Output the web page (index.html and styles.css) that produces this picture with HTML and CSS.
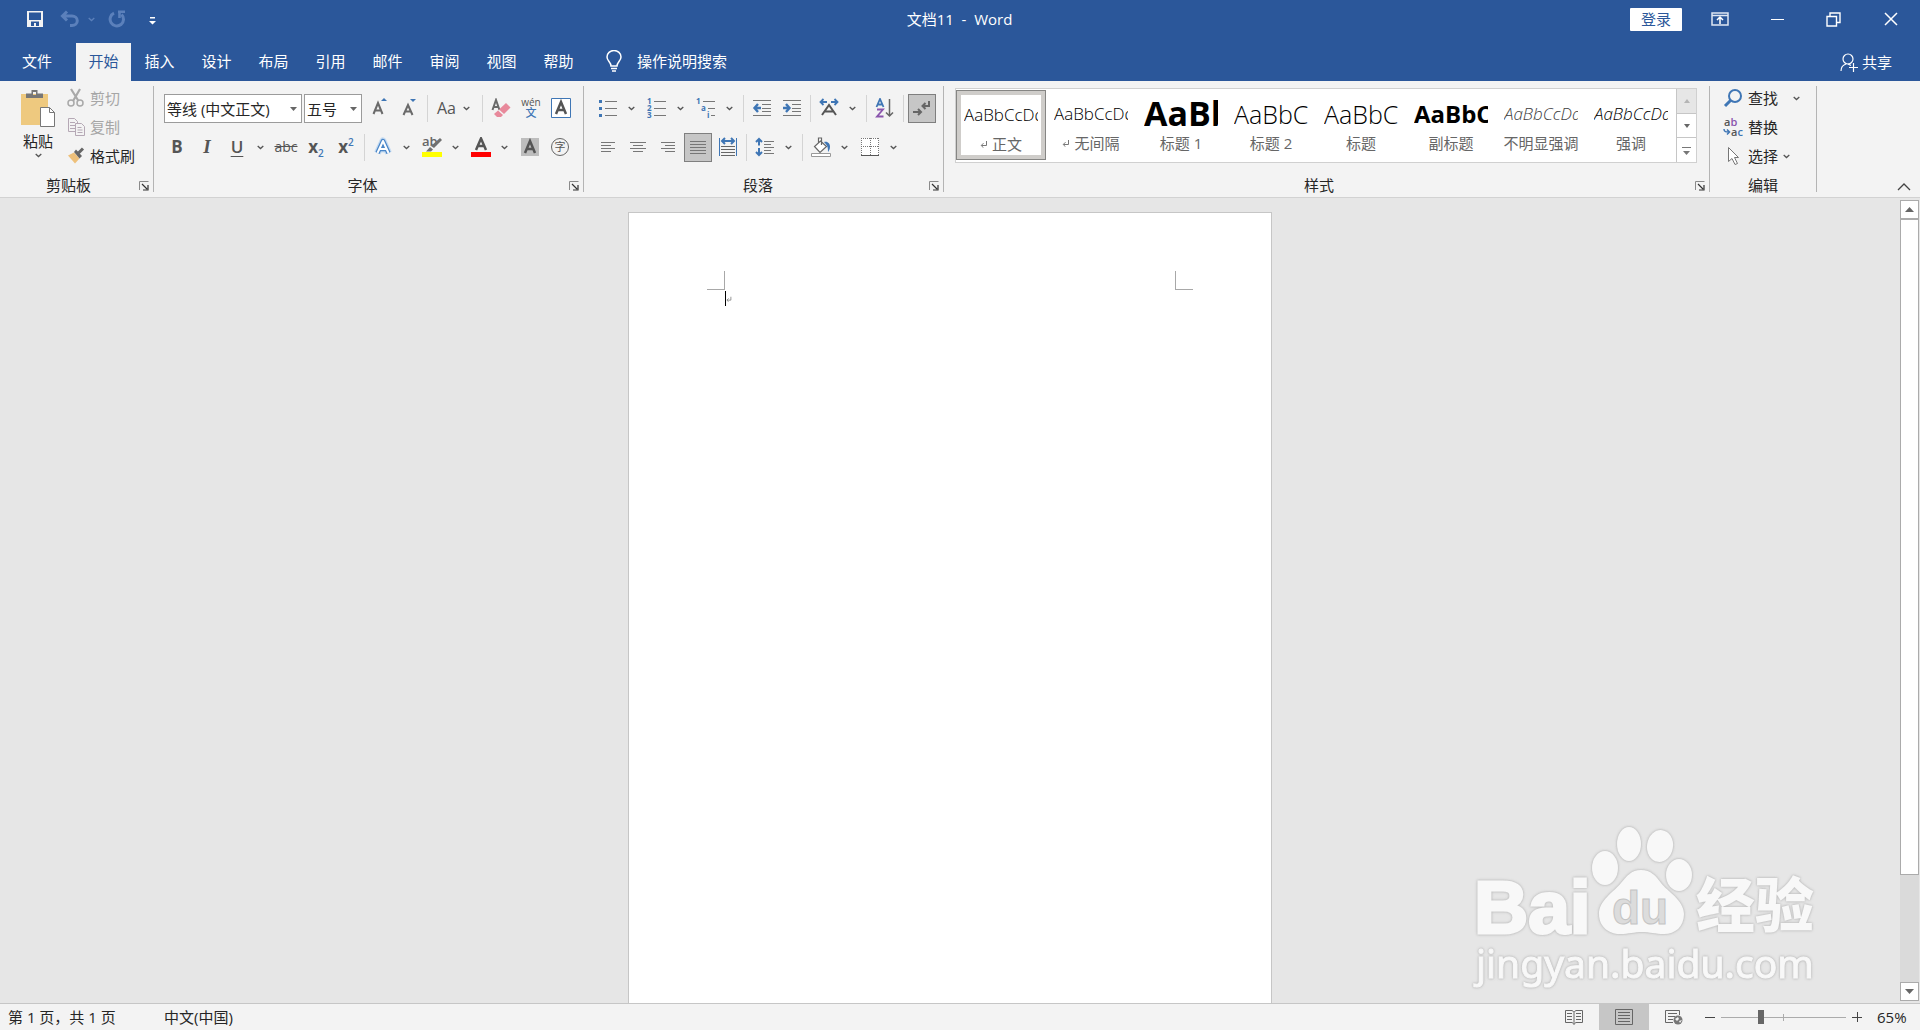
FILE: index.html
```html
<!DOCTYPE html>
<html lang="zh-CN">
<head>
<meta charset="utf-8">
<title>文档11 - Word</title>
<link rel="stylesheet" href="styles.css">
</head>
<body>
<svg class="defs" aria-hidden="true">
  <symbol id="chev" viewBox="0 0 7 5"><path d="M.7 .9 3.5 3.5 6.3 .9" fill="none" stroke="currentColor" stroke-width="1.3"/></symbol>
  <symbol id="launch" viewBox="0 0 10 10"><path d="M.5 9V.5H9.500" fill="none" stroke="#8a8a8a"/><path d="M3 3l5 5M9 4v5H4" fill="none" stroke="#333" stroke-width="1.2"/></symbol>
  <symbol id="enter" viewBox="0 0 8 8"><path d="M6.500 1v4.500H1.500M3.500 3.200 1.200 5.500l2.300 2.300" fill="none" stroke="#777"/></symbol>
</svg>

<header class="titlebar">
  <div class="quick">
    <button class="qbtn save" aria-label="保存"><svg width="18" height="18" viewBox="0 0 18 18"><path fill="#f3f3f3" fill-rule="evenodd" d="M1 1h16v16H1zM3 2.500v7.500h12V2.500zM5 11.500V16h3v-3h2v3h3v-4.500z"/></svg></button>
    <button class="qbtn undo" aria-label="撤消"><svg width="20" height="18" viewBox="0 0 20 18"><path d="M7 1.500 2.500 6 7 10.500M3 6h9a5 4.500 0 0 1 0 9.500h-2" fill="none" stroke="#5b80bb" stroke-width="3"/></svg></button>
    <button class="qbtn mini" aria-label="撤消列表"><svg width="7" height="5"><use href="#chev"/></svg></button>
    <button class="qbtn redo" aria-label="重复"><svg width="18" height="18" viewBox="0 0 18 18"><path d="M6 3.200A6.700 6.700 0 1 0 13.500 4.500" fill="none" stroke="#5b80bb" stroke-width="3"/><path d="M10 1.800h7M11.500 1.500v6.500" fill="none" stroke="#5b80bb" stroke-width="2.600"/></svg></button>
    <button class="qbtn more" aria-label="自定义"><svg width="7" height="8" viewBox="0 0 7 8"><path fill="#fff" d="M1 0h5v1.500H1zM0 4h7L3.500 7.500z"/></svg></button>
  </div>
  <h1 class="title">文档11&nbsp; -&nbsp; Word</h1>
  <div class="window">
    <button class="login">登录</button>
    <button class="wbtn" aria-label="功能区显示选项"><svg width="18" height="14" viewBox="0 0 18 14"><path fill="none" stroke="#dfe7f3" stroke-width="1.500" d="M1 1h16v12H1zM1 3.500h16"/><path fill="none" stroke="#fff" stroke-width="1.500" d="M9 12V5.500M6 8l3-3 3 3"/></svg></button>
    <button class="wbtn" aria-label="最小化"><svg width="14" height="3"><path fill="#fff" d="M1 1h13v1H1z"/></svg></button>
    <button class="wbtn" aria-label="还原"><svg width="15" height="15" viewBox="0 0 15 15"><path fill="none" stroke="#fff" stroke-width="1.400" d="M1 4.500h9.500V14H1zM4 4V1h10v9.500h-3.500"/></svg></button>
    <button class="wbtn" aria-label="关闭"><svg width="14" height="14" viewBox="0 0 14 14"><path stroke="#fff" stroke-width="1.500" d="m1 1 12 12M13 1 1 13"/></svg></button>
  </div>
</header>

<nav class="tabs">
  <button class="tab file">文件</button>
  <button class="tab active">开始</button>
  <button class="tab">插入</button>
  <button class="tab">设计</button>
  <button class="tab">布局</button>
  <button class="tab">引用</button>
  <button class="tab">邮件</button>
  <button class="tab">审阅</button>
  <button class="tab">视图</button>
  <button class="tab">帮助</button>
  <button class="tell"><svg width="16" height="22" viewBox="0 0 16 22"><path fill="none" stroke="#fff" stroke-width="1.500" d="M5 16c0-4-4-5-4-9a7 6.500 0 0 1 14 0c0 4-4 5-4 9zM5 18.500h6M6 21h4"/></svg>操作说明搜索</button>
  <button class="share"><svg width="18" height="19" viewBox="0 0 18 19"><circle cx="8" cy="6" r="5" fill="none" stroke="#fff" stroke-width="1.200"/><path fill="none" stroke="#fff" stroke-width="1.200" d="M1 18c0-4 2-6 5-7M8 11l3 1.500M13.500 10v9M9 14.500h9"/></svg>共享</button>
</nav>

<div class="ribbon">
  <section class="group clipboard">
    <div class="clip">
      <button class="paste">
        <svg width="36" height="40" viewBox="0 0 36 40"><path fill="#eec97f" d="M1 5h27v31H1z"/><path fill="#777" fill-rule="evenodd" d="M6 9V4.500h5.500V1h6v3.500H23V9zM13 3h3v3h-3z"/><path fill="#fff" stroke="#777" d="M20.500 18.500h9l5 5v14h-14z"/><path fill="none" stroke="#777" d="M29.500 18.500v5h5"/></svg>
        <span>粘贴</span>
        <svg width="7" height="5"><use href="#chev"/></svg>
      </button>
      <div class="stack">
        <button class="item off"><svg width="18" height="20" viewBox="0 0 18 20"><g fill="none" stroke="#a9a9a9"><path stroke-width="2.200" d="M4 1l7.500 12M13 1 6 13"/><circle cx="4" cy="15" r="3" stroke-width="1.500"/><circle cx="13" cy="15" r="3" stroke-width="1.500"/></g></svg>剪切</button>
        <button class="item off"><svg width="18" height="20" viewBox="0 0 18 20"><g fill="#f3f3f3" stroke="#b5a8b5"><path d="M1.500 1.500h6l3 3v10h-9z"/><path d="M3 5.500h5M3 8.500h5M3 11.500h5"/><path d="M8.500 6.500h6l3 3v9h-9z"/><path d="M10.500 10.500h4M10.500 13h5M10.500 15.500h5"/></g></svg>复制</button>
        <button class="item"><svg width="18" height="20" viewBox="0 0 18 20"><path fill="#eec07a" d="M1 9.500 7 6.500l5.500 6L8 17.500z"/><path fill="#666" d="m7 6 2-2.500 6 6.500-2.500 2.500z"/><path stroke="#666" stroke-width="3" d="m11.500 7 4.500-4.500"/></svg>格式刷</button>
      </div>
    </div>
    <footer><span>剪贴板</span><button class="launcher" aria-label="剪贴板选项"><svg width="10" height="10"><use href="#launch"/></svg></button></footer>
  </section>
  <div class="divider"></div>

  <section class="group font">
    <div class="row">
      <label class="combo name"><select aria-label="字体"><option>等线 (中文正文)</option></select><svg width="7" height="4"><path fill="#666" d="M0 0h7L3.500 4z"/></svg></label>
      <label class="combo size"><select aria-label="字号"><option>五号</option></select><svg width="7" height="4"><path fill="#666" d="M0 0h7L3.500 4z"/></svg></label>
      <button class="tool" aria-label="增大字号"><svg width="20" height="20" viewBox="0 0 20 20"><path fill="none" stroke="#6a6a6a" stroke-width="2" d="M4.500 16 9 5l4.500 11M6 12.500h6"/><path fill="#3f76b5" d="m12 3 3-3 3 3z"/></svg></button>
      <button class="tool" aria-label="减小字号"><svg width="20" height="20" viewBox="0 0 20 20"><path fill="none" stroke="#6a6a6a" stroke-width="2" d="M4.500 17 9 7l4.500 10M6 13.500h6"/><path fill="#3f76b5" d="m11 1 3 3 3-3z"/></svg></button>
      <i class="sep"></i>
      <button class="tool case">Aa<svg width="7" height="5"><use href="#chev"/></svg></button>
      <i class="sep"></i>
      <button class="tool" aria-label="清除格式"><svg width="20" height="20" viewBox="0 0 20 20"><path fill="none" stroke="#6a6a6a" stroke-width="2" d="M1.500 12 5 2l3.500 10M3 9h4"/><path fill="#e8899b" d="m15 5 4.500 4.500L13 16l-5-4.500z"/><path fill="#e8899b" d="m7 12.500 5 4.500-2 2H6l-3-3z"/></svg></button>
      <button class="tool pinyin" aria-label="拼音指南"><small>wén</small><b>文</b></button>
      <button class="tool" aria-label="字符边框"><svg width="20" height="20" viewBox="0 0 20 20"><path fill="#fff" stroke="#3f76b5" d="M.5 .5h19v19H.5z"/><path fill="none" stroke="#555" stroke-width="2.500" d="M5 16 10 4l5 12M7 12h6"/></svg></button>
    </div>
    <div class="row">
      <button class="tool bold">B</button>
      <button class="tool italic">I</button>
      <button class="tool under">U</button><button class="drop" aria-label="下划线样式"><svg width="7" height="5"><use href="#chev"/></svg></button>
      <button class="tool strike">abc</button>
      <button class="tool script"><span>x<sub>2</sub></span></button>
      <button class="tool script"><span>x<sup>2</sup></span></button>
      <i class="sep"></i>
      <button class="tool" aria-label="文本效果"><svg width="20" height="20" viewBox="0 0 20 20"><g fill="none" stroke-linejoin="round"><path stroke="#c5dbf1" stroke-width="7" d="M4.500 16 10 4l5.500 12M7 12h6"/><path stroke="#4a86c8" stroke-width="4.500" d="M4.500 16 10 4l5.500 12M7 12h6"/><path stroke="#fff" stroke-width="2" d="M4.500 16 10 4l5.500 12M7 12h6"/></g></svg></button><button class="drop" aria-label="文本效果列表"><svg width="7" height="5"><use href="#chev"/></svg></button>
      <button class="tool mark" aria-label="突出显示"><svg width="20" height="20" viewBox="0 0 20 20"><path fill="#ff0" d="M0 15h20v5H0z"/><text x="0" y="9" class="abtext">ab</text><path fill="#707070" d="m18 1 2 2-8 8-3-2zM8 10l3 2.500-2 2H4z"/></svg></button><button class="drop" aria-label="突出显示颜色"><svg width="7" height="5"><use href="#chev"/></svg></button>
      <button class="tool" aria-label="字体颜色"><svg width="20" height="20" viewBox="0 0 20 20"><path fill="red" d="M0 15h20v5H0z"/><path fill="none" stroke="#555" stroke-width="2.500" d="M5 13 10 1.500 15 13M7 9h6"/></svg></button><button class="drop" aria-label="字体颜色列表"><svg width="7" height="5"><use href="#chev"/></svg></button>
      <button class="tool" aria-label="字符底纹"><svg width="18" height="18" viewBox="0 0 18 18"><path fill="#bdbdbd" d="M0 0h18v18H0z"/><path fill="none" stroke="#555" stroke-width="2.500" d="M4 15 9 3l5 12M6 11h6"/></svg></button>
      <button class="tool"><span class="ring">字</span></button>
    </div>
    <footer><span>字体</span><button class="launcher" aria-label="字体选项"><svg width="10" height="10"><use href="#launch"/></svg></button></footer>
  </section>
  <div class="divider"></div>

  <section class="group para">
    <div class="row">
      <button class="tool" aria-label="项目符号"><svg width="20" height="20" viewBox="0 0 20 20"><path stroke="#777" d="M7 3.500h12M7 10.500h12M7 17.500h12"/><path fill="#3f76b5" d="M1 2h3v3H1zM1 9h3v3H1zM1 16h3v3H1z"/></svg></button><button class="drop" aria-label="项目符号库"><svg width="7" height="5"><use href="#chev"/></svg></button>
      <button class="tool" aria-label="编号"><svg width="20" height="20" viewBox="0 0 20 20"><path stroke="#777" d="M7 3.500h12M7 10.500h12M7 17.500h12"/><g class="nums"><text x="0" y="6">1</text><text x="0" y="13">2</text><text x="0" y="20">3</text></g></svg></button><button class="drop" aria-label="编号库"><svg width="7" height="5"><use href="#chev"/></svg></button>
      <button class="tool" aria-label="多级列表"><svg width="20" height="20" viewBox="0 0 20 20"><path stroke="#777" d="M7 3.500h12M12 10.500h7M15 17.500h4"/><g class="nums"><text x="0" y="6">1</text><text x="5" y="13">a</text><text x="11" y="20">i</text></g></svg></button><button class="drop" aria-label="多级列表库"><svg width="7" height="5"><use href="#chev"/></svg></button>
      <i class="sep"></i>
      <button class="tool" aria-label="减少缩进量"><svg width="20" height="20" viewBox="0 0 20 20"><path stroke="#777" d="M1 2.500h18M10 6.500h9M10 10.500h9M10 13.500h9M1 17.500h18"/><path fill="none" stroke="#3f76b5" stroke-width="2.400" d="M9 10H2.500M6 6 2.500 10 6 14"/></svg></button>
      <button class="tool" aria-label="增加缩进量"><svg width="20" height="20" viewBox="0 0 20 20"><path stroke="#777" d="M1 2.500h18M10 6.500h9M10 10.500h9M10 13.500h9M1 17.500h18"/><path fill="none" stroke="#3f76b5" stroke-width="2.400" d="M1 10h6.500M4 6 7.500 10 4 14"/></svg></button>
      <i class="sep"></i>
      <button class="tool" aria-label="中文版式"><svg width="20" height="20" viewBox="0 0 20 20"><path fill="none" stroke="#555" stroke-width="2" d="m3 17 7-10 7 10M6 13.500h8"/><path fill="none" stroke="#3f76b5" stroke-width="1.800" d="M8 4H1.500M4.500 1 1.500 4l3 3M12 4h6.500M15.500 1l3 3-3 3"/></svg></button><button class="drop" aria-label="中文版式列表"><svg width="7" height="5"><use href="#chev"/></svg></button>
      <i class="sep"></i>
      <button class="tool" aria-label="排序"><svg width="20" height="20" viewBox="0 0 20 20"><path fill="none" stroke="#3f76b5" stroke-width="1.800" d="M1.500 9 5 1l3.500 8M3 6.500h4"/><path fill="none" stroke="#8a55ad" stroke-width="1.800" d="M2 11.500h6L2 18.500h6.500"/><path fill="none" stroke="#666" stroke-width="1.500" d="M14.500 1v17M11 14.500l3.500 3.500 3.500-3.500"/></svg></button>
      <i class="sep"></i>
      <button class="tool on" aria-label="显示编辑标记"><svg width="20" height="20" viewBox="0 0 20 20"><path fill="none" stroke="#666" stroke-width="2" d="M17 2v5h-6M13.500 4 10.500 7l3 3M1 13h7M6 10l3 3-3 3"/></svg></button>
    </div>
    <div class="row">
      <button class="tool" aria-label="左对齐"><svg width="20" height="20" viewBox="0 0 20 20"><path stroke="#777" d="M3 5.500h14M3 8.500h10M3 11.500h14M3 14.500h10"/></svg></button>
      <button class="tool" aria-label="居中"><svg width="20" height="20" viewBox="0 0 20 20"><path stroke="#777" d="M2 5.500h16M5 8.500h10M2 11.500h16M5 14.500h10"/></svg></button>
      <button class="tool" aria-label="右对齐"><svg width="20" height="20" viewBox="0 0 20 20"><path stroke="#777" d="M3 5.500h14M7 8.500h10M3 11.500h14M7 14.500h10"/></svg></button>
      <button class="tool on" aria-label="两端对齐"><svg width="20" height="20" viewBox="0 0 20 20"><path stroke="#777" d="M2 3.500h16M2 6.500h16M2 9.500h16M2 12.500h16M2 15.500h16"/></svg></button>
      <button class="tool" aria-label="分散对齐"><svg width="20" height="20" viewBox="0 0 20 20"><path stroke="#3f76b5" d="M1.500 1v18M18.500 1v18"/><path stroke="#666" d="M3 9.500h14M3 12.500h14M3 15.500h14M3 18.500h14"/><path fill="none" stroke="#3f76b5" stroke-width="2" d="M4 4h12M7 1 4 4l3 3M13 1l3 3-3 3"/></svg></button>
      <i class="sep"></i>
      <button class="tool" aria-label="行距"><svg width="20" height="20" viewBox="0 0 20 20"><path stroke="#777" d="M9 4.500h10M9 7.500h7M9 10.500h10M9 13.500h7M9 16.500h10"/><path fill="none" stroke="#3f76b5" stroke-width="2" d="M4 2v6.500M1 5l3-3 3 3M4 11v7M1 15l3 3 3-3"/></svg></button><button class="drop" aria-label="行距列表"><svg width="7" height="5"><use href="#chev"/></svg></button>
      <i class="sep"></i>
      <button class="tool" aria-label="底纹"><svg width="20" height="20" viewBox="0 0 20 20"><path fill="#fff" stroke="#999" d="M.5 16.500h19v3H.5z"/><path fill="#fff" stroke="#666" stroke-width="1.200" d="m9.500 4 6 5.500-6.500 6-5.500-6zM7.500 6V1h3v7"/><path fill="#3f76b5" d="M13 5c4-1 6 2 6 4.500 0 3-1 4-2 5.500 0-4 0-6-4-10z"/></svg></button><button class="drop" aria-label="底纹颜色"><svg width="7" height="5"><use href="#chev"/></svg></button>
      <button class="tool" aria-label="边框"><svg width="18" height="18" viewBox="0 0 18 18"><path fill="#fff" d="M0 0h18v18H0z"/><path fill="none" stroke="#777" stroke-dasharray="1 1" d="M0 .5h18M.5 0v17M17.500 0v17M9.500 0v17M0 8.500h18"/><path stroke="#555" d="M0 17.500h18"/></svg></button><button class="drop" aria-label="边框列表"><svg width="7" height="5"><use href="#chev"/></svg></button>
    </div>
    <footer><span>段落</span><button class="launcher" aria-label="段落选项"><svg width="10" height="10"><use href="#launch"/></svg></button></footer>
  </section>
  <div class="divider"></div>

  <section class="group styles">
    <div class="gallery">
      <button class="style chosen"><span class="sample">AaBbCcDd</span><span class="label"><svg width="8" height="8"><use href="#enter"/></svg>正文</span></button>
      <button class="style"><span class="sample">AaBbCcDd</span><span class="label"><svg width="8" height="8"><use href="#enter"/></svg>无间隔</span></button>
      <button class="style"><span class="sample h1">AaBb</span><span class="label">标题 1</span></button>
      <button class="style"><span class="sample h2">AaBbC</span><span class="label">标题 2</span></button>
      <button class="style"><span class="sample h2">AaBbC</span><span class="label">标题</span></button>
      <button class="style"><span class="sample h2 heavy">AaBbC</span><span class="label">副标题</span></button>
      <button class="style"><span class="sample slant faint">AaBbCcDd</span><span class="label">不明显强调</span></button>
      <button class="style"><span class="sample slant">AaBbCcDd</span><span class="label">强调</span></button>
      <div class="nudge">
        <button disabled aria-label="上一行"><svg width="6" height="4"><path fill="#b5b5b5" d="M0 4h6L3 0z"/></svg></button>
        <button aria-label="下一行"><svg width="6" height="4"><path fill="#666" d="M0 0h6L3 4z"/></svg></button>
        <button aria-label="其他样式"><svg width="9" height="9"><path fill="#777" d="M0 1h9v1H0zM1 5h7L4.500 9z"/></svg></button>
      </div>
    </div>
    <footer><span>样式</span><button class="launcher" aria-label="样式选项"><svg width="10" height="10"><use href="#launch"/></svg></button></footer>
  </section>
  <div class="divider"></div>

  <section class="group edit">
    <div class="stack">
      <button class="item"><svg width="20" height="20" viewBox="0 0 20 20"><circle cx="12" cy="8" r="6" fill="none" stroke="#3f76b5" stroke-width="2"/><path stroke="#3f76b5" stroke-width="3" d="m8 12-6 6"/></svg>查找<svg class="far" width="7" height="5"><use href="#chev"/></svg></button>
      <button class="item"><svg width="20" height="20" viewBox="0 0 20 20"><text x="1" y="9" class="rep">a<tspan fill="#8a55ad">b</tspan></text><text x="8" y="19" class="rep">a<tspan fill="#3f76b5">c</tspan></text><path fill="none" stroke="#3f76b5" stroke-width="1.500" d="M1 12c0 3 2 3 5 3M4 12.500 6.500 15 4 17.500"/></svg>替换</button>
      <button class="item"><svg width="20" height="20" viewBox="0 0 20 20"><path fill="#fff" stroke="#777" d="M5.500 1.500v14l3.500-3 3 6 2.500-1-3-6h4z"/></svg>选择<svg width="7" height="5"><use href="#chev"/></svg></button>
    </div>
    <footer><span>编辑</span></footer>
  </section>
  <div class="divider"></div>
  <button class="collapse" aria-label="折叠功能区"><svg width="14" height="8" viewBox="0 0 14 8"><path fill="none" stroke="#444" stroke-width="1.300" d="m1 7 6-6 6 6"/></svg></button>
</div>

<main class="workspace">
  <div class="canvas">
    <article class="page">
      <div class="marks"><i class="corner left"></i><i class="corner right"></i></div>
      <p class="line"><i class="caret"></i><svg width="6" height="6" viewBox="0 0 8 8"><use href="#enter"/></svg></p>
    </article>
  </div>
  <div class="scroll">
    <button aria-label="向上滚动"><svg width="9" height="5"><path fill="#666" d="M0 5h9L4.500 0z"/></svg></button>
    <div class="track"><div class="thumb"></div></div>
    <button aria-label="向下滚动"><svg width="9" height="5"><path fill="#666" d="M0 0h9L4.500 5z"/></svg></button>
  </div>
  <svg class="watermark" width="360" height="180" viewBox="0 0 360 180">
    <g class="halo">
      <text x="5" y="113" class="bai">Bai</text>
      <ellipse cx="136" cy="48" rx="13" ry="17"/>
      <ellipse cx="160" cy="24" rx="12" ry="17"/>
      <ellipse cx="191" cy="26" rx="13" ry="16" transform="rotate(8 191 26)"/>
      <ellipse cx="210" cy="55" rx="13" ry="16"/>
      <path d="M172 50c10 0 15 6 20 13 6 8 23 17 23 31 0 13-9 20-20 20-9 0-14-2-22-2s-13 2-22 2c-12 0-21-8-21-20 0-14 15-22 22-31 6-7 10-13 20-13z"/>
      <text x="227" y="107" class="jing">经验</text>
      <text x="7" y="158" class="url">jingyan.baidu.com</text>
    </g>
    <text x="143" y="104" class="du">du</text>
  </svg>
</main>

<footer class="status">
  <span class="pages">第 1 页，共 1 页</span>
  <span>中文(中国)</span>
  <div class="views">
    <button aria-label="阅读视图"><svg width="18" height="16" viewBox="0 0 18 16"><path fill="none" stroke="#666" d="M8.500 2.500 7 1.500H.5v12H7l1.500 1M9.500 2.500l1.500-1h6.500v12H11l-1.500 1M9 2v14M2 4.500h5M2 7.500h5M2 10.500h5M11 4.500h5M11 7.500h5M11 10.500h5"/></svg></button>
    <button class="on" aria-label="页面视图"><svg width="18" height="16" viewBox="0 0 18 16"><path fill="none" stroke="#666" d="M.5 .5h17v15H.5zM3 3.500h12M3 6.500h12M3 9.500h12M3 12.500h12"/></svg></button>
    <button aria-label="Web 版式"><svg width="18" height="16" viewBox="0 0 18 16"><path fill="none" stroke="#666" d="M8 13.500H.5v-12h14V6M3 4.500h9M3 7.500h7M3 10.500h5"/><circle cx="13" cy="11" r="4.500" fill="#777"/><path fill="#f3f3f3" d="m10 10 3-2 1 2-2 2zM14 12l3-1-2 3z"/></svg></button>
  </div>
  <div class="zoom">
    <button aria-label="缩小"><svg width="10" height="10"><path fill="#444" d="M0 5h10v1H0z"/></svg></button>
    <input type="range" min="0" max="100" value="31" aria-label="缩放">
    <button aria-label="放大"><svg width="10" height="10"><path fill="#444" d="M0 5h10v1H0zM5 0h1v10H5z"/></svg></button>
  </div>
  <span class="percent">65%</span>
</footer>
</body>
</html>
```
FILE: styles.css
```css
* { box-sizing: border-box; }
body {
  margin: 0;
  height: 100vh;
  display: flex;
  flex-direction: column;
  overflow: hidden;
  background: #e6e6e6;
  color: #262626;
  font: 400 15px/20px "Open Sans", "Noto Sans CJK SC", sans-serif;
}
button, select, input { font: inherit; color: inherit; margin: 0; }
button { border: 0; padding: 0; background: none; display: flex; align-items: center; justify-content: center; }
svg { flex: none; display: block; }
.defs { position: absolute; width: 0; height: 0; }

/* title bar */
.titlebar {
  flex: none;
  display: grid;
  grid-template-columns: 1fr auto 1fr;
  align-items: center;
  height: 43px;
  padding: 0 1px 5px 0;
  background: #2b579a;
  color: #fff;
}
.quick { display: flex; align-items: center; padding-left: 26px; }
.qbtn { height: 30px; }
.save { margin-right: 16px; }
.mini { width: 22px; margin-right: 6px; color: #5b80bb; }
.more { width: 52px; padding-top: 4px; }
.title { margin: 0; font-size: 15px; line-height: 20px; font-weight: 400; }
.window { display: flex; align-items: center; justify-content: flex-end; }
.login { width: 52px; height: 23px; margin-right: 9px; padding-bottom: 1px; background: #fff; color: #2b579a; border-radius: 1px; }
.wbtn { width: 57px; height: 38px; }

/* tabs */
.tabs { flex: none; display: flex; height: 38px; background: #2b579a; color: #fff; }
.tab { width: 57px; padding-bottom: 2px; }
.tab.file { width: 74px; margin-right: 2px; }
.tab.active { width: 55px; background: #f3f3f3; color: #2b579a; }
.tell { margin-left: 19px; padding-bottom: 2px; gap: 15px; }
.share { margin-left: auto; padding-right: 28px; gap: 4px; }

/* ribbon */
.ribbon { flex: none; display: flex; height: 117px; background: #f3f3f3; border-bottom: 1px solid #d2d2d2; }
.ribbon use { color: #555; }
.divider { width: 1px; margin: 5px 0; background: #b4b4b4; }
.group { display: flex; flex-direction: column; }
.group > footer { display: flex; align-items: center; height: 24px; margin-top: auto; padding-right: 2px; }
.group > footer span { flex: 1; text-align: center; padding-left: 4px; }
.launcher { width: 14px; height: 12px; align-self: flex-end; margin-bottom: 5px; }
.stack { display: flex; flex-direction: column; gap: 9px; padding-top: 7px; }
.item { height: 20px; gap: 5px; justify-content: flex-start; white-space: nowrap; }
.off { color: #a6a6a6; }
.row { display: flex; align-items: center; height: 29px; margin-top: 10px; }
.row:first-child { margin-top: 13px; }
.tool { flex: none; width: 30px; height: 28px; align-self: flex-start; color: #555; }
.tool.on { width: 28px; height: 29px; margin: 0 1px; background: #c6c6c6; border: 1px solid #7f7f7f; }
.drop { flex: none; width: 16px; height: 29px; margin-right: 3px; }
.sep { flex: none; width: 1px; height: 27px; margin: 0 3px; background: #d4d4d4; }

.clipboard { width: 153px; }
.clip { display: flex; }
.paste { flex-direction: column; justify-content: flex-start; width: 58px; padding: 8px 0 0 18px; gap: 1px; }
.paste span { line-height: 22px; }
.clipboard .stack { padding-left: 9px; }
.clipboard footer span { padding-left: 0; }

.font { width: 429px; padding-left: 8px; }
.font footer span, .para footer span { padding: 0 4px 0 0; }
.combo { position: relative; display: block; height: 29px; }
.combo select { width: 100%; height: 29px; padding: 0 2px; border: 1px solid #9b9b9b; border-radius: 0; background: #fff; appearance: none; outline: 0; }
.combo svg { position: absolute; right: 5px; top: 13px; }
.name { width: 138px; margin: 0 2px; }
.size { width: 58px; margin-right: 2px; }
.case { width: 48px; gap: 7px; font-size: 16px; padding-right: 3px; }
.pinyin { flex-direction: column; }
.pinyin small { font-size: 10px; line-height: 10px; }
.pinyin b { font-size: 11px; line-height: 12px; color: #3f76b5; font-weight: 500; }
.bold { font-size: 17px; font-weight: 700; }
.italic { font: italic 700 19px/20px "Liberation Serif", serif; }
.under { font-size: 17px; font-weight: 600; text-decoration: underline; text-underline-offset: 3px; }
.strike { font-size: 14px; text-decoration: line-through; }
.script { font-size: 17px; font-weight: 700; }
.script sub, .script sup { font-size: 10px; line-height: 0; color: #3f76b5; font-weight: 600; }
.abtext { font-size: 13px; font-weight: 600; fill: #666; }
.ring { width: 18px; height: 18px; border: 1px solid #666; border-radius: 50%; font-size: 11px; line-height: 16px; }
.nums { font-size: 8px; font-weight: 700; fill: #3f76b5; }
.rep { font-size: 11px; font-weight: 600; fill: #555; }

.para { width: 359px; padding-left: 9px; }

/* style gallery */
.styles { width: 765px; padding: 7px 0 0 11px; }
.styles footer span { padding: 0 10px 0 0; }
.gallery { display: flex; width: 742px; height: 75px; background: #fff; border: 1px solid #d0d0d0; }
.style { width: 90px; height: 70px; margin-top: 1px; padding: 0 8px; flex-direction: column; justify-content: flex-start; color: #666; }
.chosen { border: 1px solid #868684; padding: 0 7px; box-shadow: inset 0 0 0 4px #cfcdca; }
.sample { width: 74px; height: 43px; overflow: hidden; text-align: left; font-size: 17px; line-height: 48px; font-weight: 300; color: #000; white-space: nowrap; }
.h1 { font-size: 34px; line-height: 46px; font-weight: 700; }
.h2 { font-size: 25px; }
.heavy { font-size: 24px; font-weight: 700; }
.slant { font-style: italic; }
.faint { color: #404040; }
.label { display: flex; align-items: center; gap: 4px; white-space: nowrap; }
.nudge { flex: 1; display: flex; flex-direction: column; border-left: 1px solid #c6c6c6; }
.nudge button { flex: 1; }
.nudge button + button { border-top: 1px solid #c6c6c6; }
.nudge button:disabled { background: #e6e6e6; }

.edit { width: 106px; }
.edit .stack { padding-left: 13px; }
.edit .far { margin-left: 10px; }
.edit footer span { flex: none; padding-left: 38px; }
.collapse { margin: auto 9px 3px auto; width: 14px; height: 14px; }

/* document */
.workspace { flex: 1; min-height: 0; display: flex; position: relative; }
.canvas { flex: 1; display: flex; justify-content: center; padding: 14px 1px 0 0; }
.page { width: 644px; padding-top: 58px; background: #fff; border: 1px solid #c6c6c6; border-bottom: 0; }
.marks { display: flex; justify-content: space-between; padding: 0 78px; }
.corner { width: 18px; height: 19px; border-bottom: 1px solid #a8a8a8; }
.left { border-right: 1px solid #a8a8a8; }
.right { border-left: 1px solid #a8a8a8; }
.line { display: flex; align-items: center; margin: 1px 0 0 96px; }
.caret { width: 1px; height: 15px; background: #000; }
.scroll { width: 20px; display: flex; flex-direction: column; padding: 2px 1px 2px 0; }
.scroll button { height: 19px; background: #fff; border: 1px solid #ababab; }
.track { flex: 1; background: #dadada; }
.thumb { height: 86%; background: #fff; border: 1px solid #ababab; }
.watermark { position: absolute; right: 91px; bottom: 3px; overflow: visible; }
.halo { fill: #f8f8f8; filter: drop-shadow(0 0 1px #bbb) drop-shadow(0 0 1px #ccc); }
.bai { font: 700 75px "Liberation Sans", sans-serif; stroke: #f8f8f8; stroke-width: 3px; }
.jing { font: 900 59px "Noto Sans CJK SC", sans-serif; }
.url { font: 400 39px "Noto Sans", sans-serif; stroke: #f8f8f8; stroke-width: 1px; }
.du { font: 700 46px "Liberation Sans", sans-serif; fill: #dcdcdc; stroke: #c4c4c4; stroke-width: 1px; }

/* status bar */
.status { flex: none; display: flex; align-items: center; height: 27px; padding-left: 8px; border-top: 1px solid #c6c6c6; background: #f3f3f3; }
.status > span { padding-bottom: 1px; }
.pages { width: 156px; }
.views { display: flex; margin-left: auto; align-self: stretch; }
.views button { width: 50px; }
.views .on { background: #c6c6c6; }
.zoom { display: flex; align-items: center; gap: 6px; margin-left: 6px; }
.zoom input { appearance: none; width: 125px; height: 15px; background: linear-gradient(#ababab, #ababab) 0 7px / 100% 1px no-repeat, linear-gradient(#ababab, #ababab) 62px 4px / 1px 7px no-repeat; }
.zoom input::-webkit-slider-thumb { appearance: none; width: 6px; height: 14px; background: #666; }
.percent { width: 58px; padding-left: 15px; }
```
